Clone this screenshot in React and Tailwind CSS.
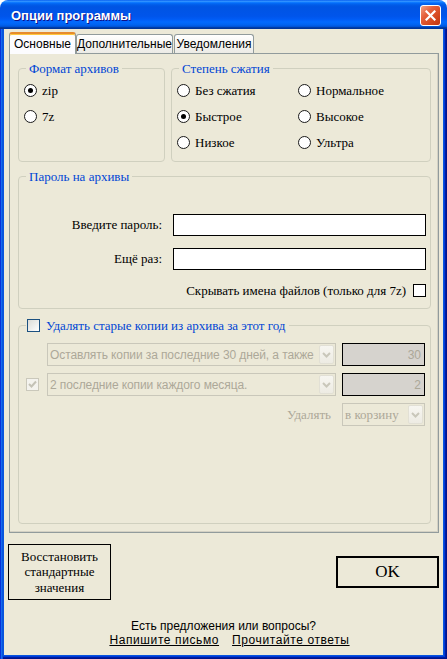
import React from "react";

const SERIF = "[font-family:'Liberation_Serif','Times_New_Roman',serif]";

function Radio({ checked, label }) {
  return (
    <div className="flex items-center h-[26px]">
      <span className="w-[13px] h-[13px] shrink-0 rounded-full border border-[#1A1A1A] bg-white flex items-center justify-center">
        {checked && <span className="w-[5px] h-[5px] rounded-full bg-black" />}
      </span>
      <span className={"ml-[5px] text-[13px] leading-[15px] text-black " + SERIF}>{label}</span>
    </div>
  );
}

function Group({ title, className, children }) {
  return (
    <div className={"relative border border-[#D0D0BF] rounded-[4px] " + className}>
      <div
        className={
          "absolute -top-[8px] left-[7px] px-[3px] bg-[#ECE9D8] text-[#0046D5] text-[13px] leading-[15px] " + SERIF
        }
      >
        {title}
      </div>
      {children}
    </div>
  );
}

function Chevron() {
  return (
    <svg width="9" height="6" viewBox="0 0 9 6">
      <polyline points="1,1 4.5,4.5 8,1" fill="none" stroke="#C9C7BA" strokeWidth="2" />
    </svg>
  );
}

function Select({ text, serif, className }) {
  return (
    <div className={"flex items-center h-[23px] border border-[#C9C7BA] bg-[#ECE9D8] " + className}>
      <span
        className={
          "flex-1 pl-[2px] whitespace-nowrap overflow-hidden text-[#ACA899] " +
          (serif ? "text-[13px] " + SERIF : "text-[12px] tracking-[-0.1px]")
        }
      >
        {text}
      </span>
      <span className="w-[15px] h-[19px] mr-px shrink-0 rounded-[2px] border border-[#E2E0D5] bg-[linear-gradient(to_bottom,#F7F6F1,#EDEBE3)] flex items-center justify-center">
        <Chevron />
      </span>
    </div>
  );
}

function NumBox({ value }) {
  return (
    <div className="ml-[6px] w-[83px] h-[23px] border border-black bg-[#D6D3CE] flex items-center justify-end pr-[3px] text-[12px] text-[#ACA899]">
      {value}
    </div>
  );
}

export default function App() {
  return (
    <div className="w-[447px] h-[659px] flex flex-col rounded-t-[8px] overflow-hidden bg-white [font-family:'Liberation_Sans',Arial,sans-serif]">
      {/* Title bar */}
      <div className="h-[29px] shrink-0 flex items-start justify-between bg-[linear-gradient(to_bottom,#0058EE_0%,#3593FF_4%,#288EFF_6%,#127DFF_8%,#036FFC_10%,#0262EE_14%,#0057E5_20%,#0054E3_24%,#0055EB_56%,#005BF5_66%,#026AFE_76%,#0062EF_86%,#0052D6_92%,#0040AB_94%,#003092_100%)]">
        <div className="pl-[11px] pt-[8px] text-[13px] leading-[15px] font-bold text-white [text-shadow:1px_1px_#0F1089]">
          Опции программы
        </div>
        <div className="mt-[5px] mr-[6px] w-[21px] h-[21px] rounded-[3px] border border-white bg-[linear-gradient(135deg,#F2A184_0%,#E5603B_35%,#D4481F_70%,#C13512_100%)] flex items-center justify-center">
          <svg width="11" height="11" viewBox="0 0 11 11">
            <path d="M1.5 1.5 L9.5 9.5 M9.5 1.5 L1.5 9.5" stroke="white" strokeWidth="2.2" strokeLinecap="square" />
          </svg>
        </div>
      </div>

      {/* Frame + body */}
      <div className="flex-1 flex flex-col px-[4px] pb-[4px] bg-[#0855DD] shadow-[inset_1px_0_#0831D9,inset_2px_0_#166AEE,inset_3px_0_#0855DD,inset_-1px_-1px_#00138C,inset_-2px_-2px_#001EA0,inset_-3px_-3px_#003BDA]">
        <div className="flex-1 flex flex-col bg-[#ECE9D8]">
          {/* Tabs */}
          <div className="mt-[3px] ml-[5px] flex items-end h-[21px]">
            <div className="relative z-10 -mb-px w-[67px] h-[22px] flex items-center justify-center rounded-t-[3px] border-x border-[#919B9C] border-t-2 border-t-[#E68B2C] shadow-[inset_0_1px_#FFC73C] bg-[#FCFCFE] text-[12px] text-black">
              Основные
            </div>
            <div className="w-[97px] h-[19px] flex items-center justify-center rounded-t-[3px] border-x border-t border-[#919B9C] bg-[linear-gradient(to_bottom,#FFFFFF,#ECEBE6)] text-[12px] text-black">
              Дополнительные
            </div>
            <div className="ml-[1px] w-[80px] h-[19px] flex items-center justify-center rounded-t-[3px] border-x border-t border-[#919B9C] bg-[linear-gradient(to_bottom,#FFFFFF,#ECEBE6)] text-[12px] text-black">
              Уведомления
            </div>
          </div>

          {/* Panel */}
          <div className="ml-[5px] mr-[4px] h-[480px] border border-[#919B9C] shadow-[inset_-1px_-1px_#D4D1C4] bg-[#ECE9D8] pt-[14px] pl-[8px] pr-[7px] flex flex-col">
            <div className="flex">
              <Group title="Формат архивов" className="w-[147px] h-[94px] pt-[8px] pl-[5px]">
                <Radio checked label="zip" />
                <Radio label="7z" />
              </Group>
              <Group title="Степень сжатия" className="ml-[6px] w-[260px] h-[94px] pt-[8px] pl-[5px]">
                <div className="grid grid-cols-[121px_1fr]">
                  <Radio label="Без сжатия" />
                  <Radio label="Нормальное" />
                  <Radio checked label="Быстрое" />
                  <Radio label="Высокое" />
                  <Radio label="Низкое" />
                  <Radio label="Ультра" />
                </div>
              </Group>
            </div>

            <Group title="Пароль на архивы" className="mt-[14px] h-[133px] pt-[37px] pr-[4px] flex flex-col items-end">
              <div className="flex items-center h-[22px]">
                <span className={"mr-[11px] text-[13px] text-black " + SERIF}>Введите пароль:</span>
                <div className="w-[253px] h-[22px] border border-black bg-white" />
              </div>
              <div className="mt-[12px] flex items-center h-[22px]">
                <span className={"mr-[11px] text-[13px] text-black " + SERIF}>Ещё раз:</span>
                <div className="w-[253px] h-[22px] border border-black bg-white" />
              </div>
              <div className="mt-[14px] flex items-center h-[13px]">
                <span className={"mr-[7px] text-[13px] text-black " + SERIF}>Скрывать имена файлов (только для 7z)</span>
                <span className="w-[13px] h-[13px] border border-black bg-white" />
              </div>
            </Group>

            <div className="relative mt-[16px] h-[199px] border border-[#D0D0BF] rounded-[4px] pt-[17px]">
              <div className="absolute -top-[8px] left-[7px] h-[15px] pl-px pr-[4px] bg-[#ECE9D8] flex items-center">
                <span className="w-[13px] h-[13px] border border-[#1C5180] bg-[linear-gradient(135deg,#DCDCD7,#FFFFFF)]" />
                <span className={"ml-[6px] text-[13px] leading-[15px] text-[#0046D5] " + SERIF}>
                  Удалять старые копии из архива за этот год
                </span>
              </div>

              <div className="pl-[28px] flex items-center">
                <Select className="w-[289px]" text="Оставлять копии за последние 30 дней, а также" />
                <NumBox value="30" />
              </div>

              <div className="mt-[7px] pl-[7px] flex items-center">
                <span className="w-[13px] h-[13px] border border-[#CAC8BB] bg-[#F4F3EE] flex items-center justify-center">
                  <svg width="9" height="9" viewBox="0 0 9 9">
                    <polyline points="1,4 3.5,6.5 8,1.5" fill="none" stroke="#C4C2B6" strokeWidth="2" />
                  </svg>
                </span>
                <Select className="ml-[8px] w-[289px]" text="2 последние копии каждого месяца." />
                <NumBox value="2" />
              </div>

              <div className="mt-[7px] pl-[28px] flex items-center">
                <div className={"w-[289px] pr-[5px] text-right text-[13px] text-[#ACA899] " + SERIF}>Удалять</div>
                <Select serif className="ml-[6px] w-[83px]" text="в корзину" />
              </div>
            </div>
          </div>

          {/* Buttons */}
          <div className="mt-[11px] ml-[4px] mr-[4px] flex items-center justify-between">
            <div className={"w-[103px] h-[56px] border border-black flex items-center justify-center text-center text-[13px] leading-[15.5px] text-black " + SERIF}>
              Восстановить
              <br />
              стандартные
              <br />
              значения
            </div>
            <div className={"w-[103px] h-[32px] border-2 border-black flex items-center justify-center text-[17px] text-black " + SERIF}>
              OK
            </div>
          </div>

          {/* Footer */}
          <div className="mt-[19px] text-center text-[12px] leading-[14px] text-black">Есть предложения или вопросы?</div>
          <div className="pl-[12px] flex justify-center gap-[13px] text-[12px] leading-[14px] tracking-[0.6px] text-black">
            <span className="underline">Напишите письмо</span>
            <span className="underline">Прочитайте ответы</span>
          </div>
        </div>
      </div>
    </div>
  );
}
